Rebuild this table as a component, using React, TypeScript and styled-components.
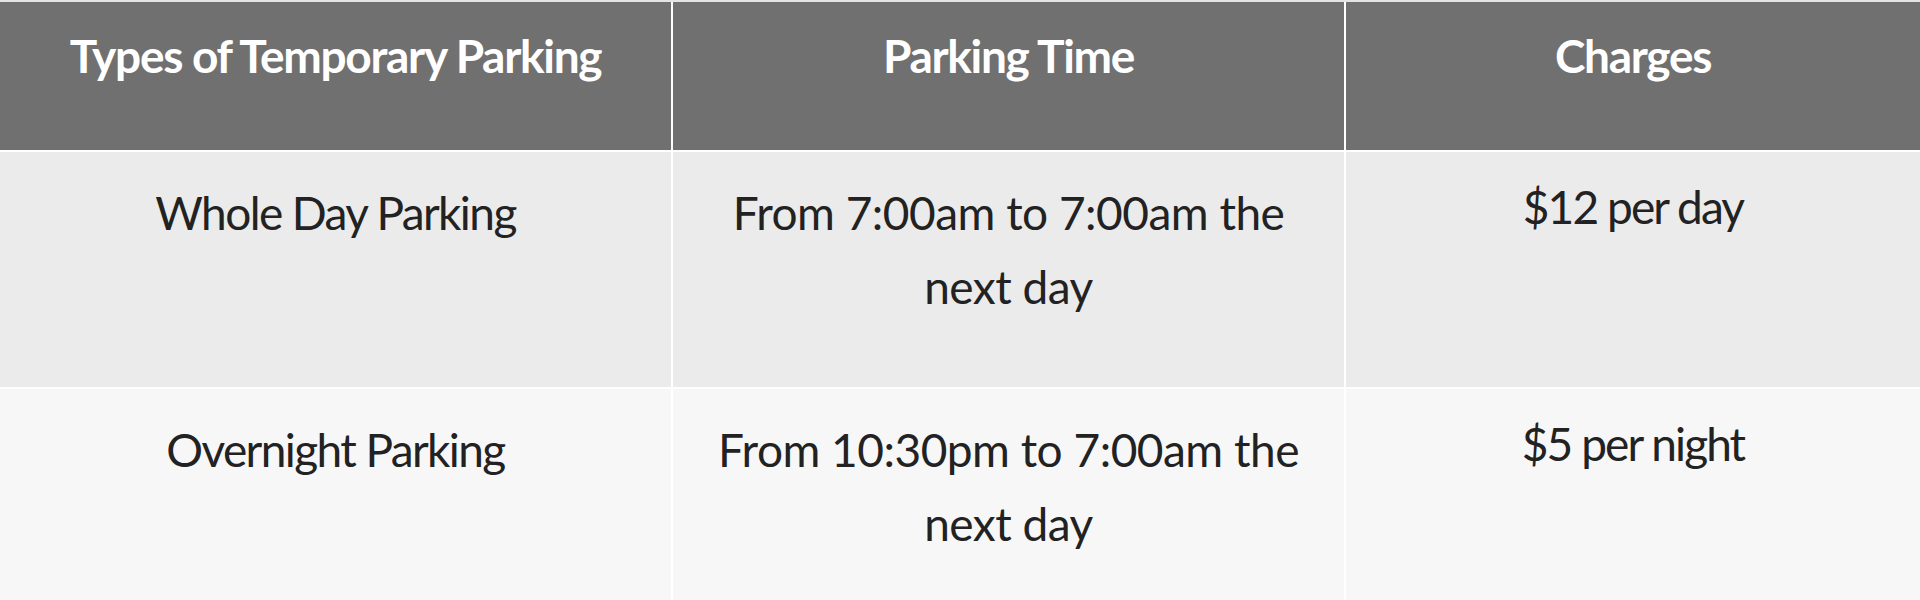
import React from "react";
import styled, { createGlobalStyle } from "styled-components";

const GlobalStyle = createGlobalStyle`
  html, body {
    margin: 0;
    padding: 0;
    background: #ffffff;
  }
  body {
    font-family: Lato, "Liberation Sans", Arial, sans-serif;
  }
`;

const Table = styled.div`
  display: grid;
  grid-template-columns: 671px 671px 1fr;
  column-gap: 2px;
  row-gap: 2px;
  width: 1920px;
  background: #ffffff;
  border-top: 2px solid #e4e4e4;
`;

const HeaderCell = styled.div`
  background: #707070;
  color: #ffffff;
  font-family: Lato, "Liberation Sans", Arial, sans-serif;
  font-weight: 700;
  font-size: 46px;
  line-height: 69px;
  letter-spacing: -1.3px;
  text-align: center;
  padding: 19px 24px 60px;
  height: 148px;
  box-sizing: border-box;
`;

const Cell = styled.div<{ $bg: string; $top: number; $tracking: number }>`
  background: ${(p) => p.$bg};
  color: #222222;
  font-family: Lato, "Liberation Sans", Arial, sans-serif;
  font-weight: 400;
  font-size: 46px;
  line-height: 74px;
  letter-spacing: ${(p) => p.$tracking}px;
  text-align: center;
  padding: ${(p) => p.$top}px 40px 0;
  height: 235px;
  box-sizing: border-box;
`;

const headers = ["Types of Temporary Parking", "Parking Time", "Charges"];

const columns = [
  { top: 24, tracking: -1.6 },
  { top: 24, tracking: -0.5 },
  { top: 18, tracking: -1.9 },
];

const rows = [
  {
    bg: "#ebebeb",
    cells: ["Whole Day Parking", "From 7:00am to 7:00am the next day", "$12 per day"],
  },
  {
    bg: "#f7f7f7",
    cells: ["Overnight Parking", "From 10:30pm to 7:00am the next day", "$5 per night"],
  },
];

export default function App() {
  return (
    <>
      <GlobalStyle />
      <Table>
        {headers.map((h) => (
          <HeaderCell key={h}>{h}</HeaderCell>
        ))}
        {rows.map((r) =>
          r.cells.map((c, i) => (
            <Cell key={c} $bg={r.bg} $top={columns[i].top} $tracking={columns[i].tracking}>
              {c}
            </Cell>
          ))
        )}
      </Table>
    </>
  );
}
